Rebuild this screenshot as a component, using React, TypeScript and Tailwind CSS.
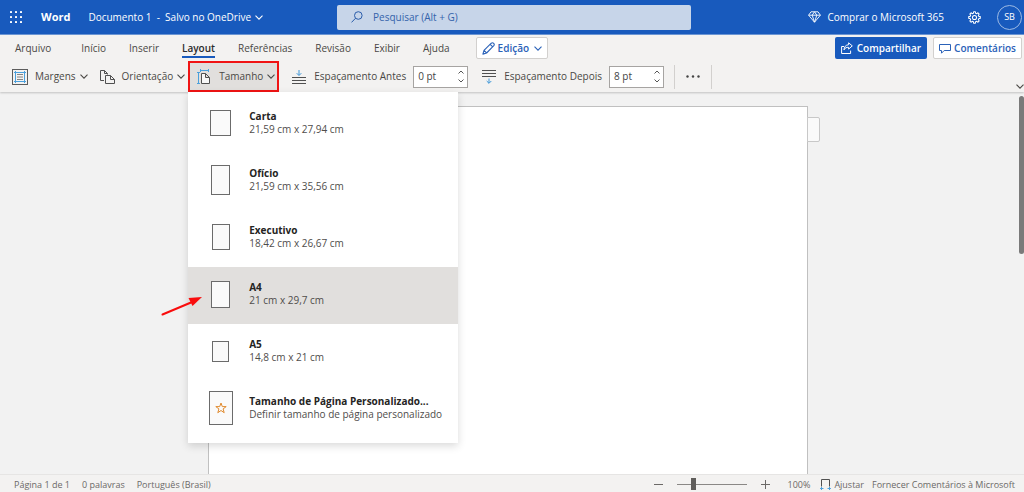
import React from "react";

type IconProps = { className?: string };

function Chevron({ className = "" }: IconProps) {
  return (
    <svg viewBox="0 0 8 5" fill="none" stroke="currentColor" strokeWidth="1.1" className={`h-[5px] w-2 shrink-0 ${className}`} aria-hidden="true">
      <path d="M.5.6 4 4.1 7.5.6" />
    </svg>
  );
}

function WaffleIcon() {
  const steps = [0, 5, 10];
  return (
    <svg viewBox="0 0 12 12" fill="currentColor" className="size-3" aria-hidden="true">
      {steps.map((y) => steps.map((x) => <rect key={`${x}-${y}`} x={x} y={y} width="2" height="2" rx=".6" />))}
    </svg>
  );
}

function SearchIcon() {
  return (
    <svg viewBox="0 0 12 12" fill="none" stroke="currentColor" className="size-3 shrink-0" aria-hidden="true">
      <circle cx="7.3" cy="4.5" r="3.8" />
      <path d="M4.6 7.2.5 11.4" />
    </svg>
  );
}

function DiamondIcon() {
  return (
    <svg viewBox="0 0 13 12" fill="none" stroke="currentColor" strokeLinejoin="round" className="h-3 w-[13px] shrink-0" aria-hidden="true">
      <path d="M3 .8h7l2.4 3.4-5.9 7L.6 4.2zM.6 4.2h11.8M4.2 4.2l2.3 7 2.3-7L6.5.8z" strokeWidth=".9" />
    </svg>
  );
}

function GearIcon() {
  return (
    <svg viewBox="0 0 24 24" fill="none" stroke="currentColor" strokeWidth="1.9" strokeLinejoin="round" className="size-[13px]" aria-hidden="true">
      <path d="m10 4 .4-2.7h3.2L14 4l2.2.9 2.2-1.6 2.3 2.3-1.6 2.2.9 2.2 2.7.4v3.2l-2.7.4-.9 2.2 1.6 2.2-2.3 2.3-2.2-1.6-2.2.9-.4 2.7h-3.2L10 20l-2.2-.9-2.2 1.6-2.3-2.3 1.6-2.2L4 14l-2.7-.4v-3.2L4 10l.9-2.2-1.6-2.2 2.3-2.3 2.2 1.6z" />
      <circle cx="12" cy="12" r="3.8" />
    </svg>
  );
}

function PencilIcon() {
  return (
    <svg viewBox="0 0 13 13" fill="none" stroke="currentColor" strokeWidth="1.1" strokeLinejoin="round" className="size-[13px]" aria-hidden="true">
      <path d="M.9 12.1 2 8.4 9.3 1.2c1.7-1.3 3.8.8 2.5 2.5L4.6 11zM2 8.4 4.6 11M8.2 2.3l2.5 2.5" />
    </svg>
  );
}

function ShareIcon() {
  return (
    <svg viewBox="0 0 12 12" fill="none" stroke="currentColor" strokeLinejoin="round" className="size-3" aria-hidden="true">
      <path d="M3 4.5H.6v7h9V8.6M7.6.8l3.7 3.1-3.7 3.2V5.3C5.4 5.2 4 6 3 7.9c.1-3 1.7-5 4.6-5.2z" />
    </svg>
  );
}

function CommentIcon() {
  return (
    <svg viewBox="0 0 12 11" fill="none" stroke="currentColor" className="h-[11px] w-3" aria-hidden="true">
      <path d="M.5 1.5h11v6H5.2L2.5 10.2V7.5h-2z" />
    </svg>
  );
}

function MarginsIcon() {
  return (
    <svg viewBox="0 0 16 16" fill="none" className="size-4 shrink-0" aria-hidden="true">
      <rect x=".5" y=".5" width="15" height="15" stroke="#5c5c5c" />
      <path d="M3.5 2v12M12.5 2v12M2 3.5h12M2 12.5h12" stroke="#4ba0dc" />
      <path d="M5 5.5h6M5 8h6M5 10.5h6" stroke="#777" strokeWidth=".9" />
    </svg>
  );
}

function OrientationIcon() {
  return (
    <svg viewBox="0 0 15 14" fill="none" stroke="#505050" className="h-3.5 w-[15px] shrink-0" aria-hidden="true">
      <path d="M4 10.5H.5V.5h4l3 3v1M4.5.5v3h3" />
      <path d="M5.5 5.5h5l4 4v4h-9zM10.5 5.5v4h4" />
    </svg>
  );
}

function SizeIcon() {
  return (
    <svg viewBox="0 0 13 15" fill="none" className="h-[15px] w-[13px] shrink-0" aria-hidden="true">
      <path d="M3.5 1.5h8M3.5 0v3M11.5 0v3M1.5 3.5v11M0 3.5h3M0 14.5h3" stroke="#4ba0dc" />
      <path d="M4.5 4.5h4l4 4v6h-8zM8.5 4.5v4h4" stroke="#505050" fill="#f7f7f7" />
    </svg>
  );
}

function SpaceBeforeIcon() {
  return (
    <svg viewBox="0 0 14 14" fill="none" className="size-3.5 shrink-0" aria-hidden="true">
      <path d="M7 0v5.2M4.7 3.2 7 5.5l2.3-2.3" stroke="#3f97d8" />
      <path d="M0 7.5h14M0 10.5h14M0 13.5h14" stroke="#505050" />
    </svg>
  );
}

function SpaceAfterIcon() {
  return (
    <svg viewBox="0 0 14 14" fill="none" className="size-3.5 shrink-0" aria-hidden="true">
      <path d="M0 .5h14M0 3.5h14M0 6.5h14" stroke="#505050" />
      <path d="M7 8.5v4.7M4.7 11 7 13.3 9.3 11" stroke="#3f97d8" />
    </svg>
  );
}

function FitIcon() {
  return (
    <svg viewBox="0 0 11 11" fill="none" className="size-[11px]" aria-hidden="true">
      <path d="M1.5 7.5v-7h8v7" stroke="#505050" />
      <path d="M.5 9.5h3M7.5 9.5h3M2 8 .5 9.5 2 11M9 8l1.5 1.5L9 11" stroke="#4ba0dc" />
    </svg>
  );
}

const tabs = ["Início", "Inserir", "Layout", "Referências", "Revisão", "Exibir", "Ajuda"];

const sizes = [
  { name: "Carta", detail: "21,59 cm x 27,94 cm", sheet: "h-[26px] w-[21px]" },
  { name: "Ofício", detail: "21,59 cm x 35,56 cm", sheet: "h-[30px] w-[19px]" },
  { name: "Executivo", detail: "18,42 cm x 26,67 cm", sheet: "h-[26px] w-[18px]" },
  { name: "A4", detail: "21 cm x 29,7 cm", sheet: "h-[27px] w-[19px]", selected: true },
  { name: "A5", detail: "14,8 cm x 21 cm", sheet: "h-[21px] w-[17px]" },
  { name: "Tamanho de Página Personalizado...", detail: "Definir tamanho de página personalizado", sheet: "h-[34px] w-6", custom: true },
];

function SizeMenu() {
  return (
    <div role="menu" aria-label="Tamanho" className="absolute top-full left-0 z-20 w-[270px] bg-white pt-1 pb-[5px] shadow-[0_3px_8px_rgba(0,0,0,0.15)]">
      {sizes.map((s) => (
        <button
          key={s.name}
          role="menuitem"
          className={`flex h-[57px] w-full items-center pb-[3px] pl-1 text-left ${s.selected ? "bg-[#e1dfdd]" : "bg-white"}`}
        >
          <span className="flex w-[57px] shrink-0 justify-center">
            <span className={`flex items-center justify-center border border-[#6b6b6b] bg-[#fafafa] ${s.sheet}`}>
              {s.custom && (
                <svg viewBox="0 0 12 12" fill="none" stroke="#e08a2e" className="size-3" aria-hidden="true">
                  <path d="m6 1 1.3 3.6h3.9L8.1 6.9l1.1 3.8L6 8.5l-3.2 2.2 1.1-3.8L.8 4.6h3.9z" />
                </svg>
              )}
            </span>
          </span>
          <span className="flex flex-col whitespace-nowrap text-[10px] leading-[13px]">
            <span className="font-bold text-[#252423]">{s.name}</span>
            <span className="text-[#4f4d4b]">{s.detail}</span>
          </span>
        </button>
      ))}
    </div>
  );
}

function Spinner({ id, value }: { id: string; value: string }) {
  return (
    <div className="flex h-[22px] w-[55px] border border-[#a6a4a2] bg-white">
      <input id={id} defaultValue={value} className="w-0 min-w-0 flex-1 pl-1 text-[10px] text-[#444] outline-none" />
      <div className="flex w-3 flex-col justify-around py-px text-[#555]">
        <button aria-label="Aumentar" className="flex justify-center"><svg viewBox="0 0 6 4" fill="none" stroke="currentColor" className="h-1 w-1.5"><path d="m.5 3.5L3 1l2.5 2.5" /></svg></button>
        <button aria-label="Diminuir" className="flex justify-center"><svg viewBox="0 0 6 4" fill="none" stroke="currentColor" className="h-1 w-1.5"><path d="M.5.5 3 3 5.5.5" /></svg></button>
      </div>
    </div>
  );
}

function Header() {
  return (
    <header className="grid h-[35px] shrink-0 grid-cols-[1fr_354px_1fr] items-center border-b border-[#6d97d6] bg-[#185abd] pl-1 text-white">
      <div className="flex items-center whitespace-nowrap pl-1.5">
        <button aria-label="Iniciador de aplicativos"><WaffleIcon /></button>
        <span className="ml-[19px] text-[11px] font-bold">Word</span>
        <button className="ml-[18px] flex items-center gap-1 text-[10px]">
          <span>Documento 1&nbsp; - &nbsp;Salvo no OneDrive</span>
          <Chevron />
        </button>
      </div>
      <label className="flex h-[25px] items-center gap-2.5 rounded-xs bg-[#c7d5e9] pl-3.5 text-[#2a5caa]">
        <SearchIcon />
        <input type="search" aria-label="Pesquisar" placeholder="Pesquisar (Alt + G)" className="min-w-0 flex-1 text-[10px] outline-none placeholder:text-[#3563ab]" />
      </label>
      <div className="flex items-center justify-end whitespace-nowrap pr-0.5">
        <button className="flex items-center gap-1.5 text-[10px]"><DiamondIcon />Comprar o Microsoft 365</button>
        <button aria-label="Configurações" className="ml-6"><GearIcon /></button>
        <button className="ml-4 flex size-[25px] items-center justify-center rounded-full border border-[#9dbae4] text-[9px]">SB</button>
      </div>
    </header>
  );
}

function Ribbon() {
  return (
    <div className="relative z-10 shrink-0 bg-[#f3f2f1] shadow-[0_1px_2px_rgba(0,0,0,0.2)]">
      <div className="flex h-[26px] items-center pr-0.5 pl-[15px]">
        <nav className="flex items-center gap-[23px] whitespace-nowrap text-[10px] leading-4 text-[#4a4845]">
          <button className="mr-[7px]">Arquivo</button>
          {tabs.map((t) => (
            <button key={t} className={t === "Layout" ? "relative font-semibold text-[#2b2b2b] after:absolute after:-bottom-0.5 after:left-0 after:h-0.5 after:w-full after:bg-[#185abd]" : ""}>{t}</button>
          ))}
        </nav>
        <button className="ml-[26px] flex h-[22px] items-center gap-[3px] rounded-xs border border-[#d2d0ce] bg-white px-[5px] text-[10px] font-semibold text-[#2b62b8]">
          <PencilIcon />Edição<Chevron className="ml-0.5" />
        </button>
        <div className="ml-auto flex gap-1.5 whitespace-nowrap text-[10px] font-semibold">
          <button className="flex h-[22px] items-center gap-1 rounded-xs bg-[#185abd] px-1.5 text-white"><ShareIcon />Compartilhar</button>
          <button className="flex h-[22px] items-center gap-[3px] rounded-xs border border-[#d2d0ce] bg-white px-[5px] text-[#2b62b8]"><CommentIcon />Comentários</button>
        </div>
      </div>
      <div className="flex h-[31px] items-center whitespace-nowrap pl-3 text-[10px] text-[#4a4845]">
        <button className="flex items-center"><MarginsIcon /><span className="mr-1 ml-[7px]">Margens</span><Chevron /></button>
        <button className="ml-3 flex items-center"><OrientationIcon /><span className="mr-1 ml-[7px]">Orientação</span><Chevron /></button>
        <div className="relative ml-[3px]">
          <button aria-expanded="true" className="flex h-[31px] w-[91px] items-center border-2 border-[#f01414] bg-[#e1dfdd] pl-[7px]">
            <SizeIcon /><span className="mr-1 ml-[9px]">Tamanho</span><Chevron />
          </button>
          <SizeMenu />
        </div>
        <label htmlFor="before" className="mr-[7px] ml-[13px] flex items-center gap-2"><SpaceBeforeIcon />Espaçamento Antes</label>
        <Spinner id="before" value="0 pt" />
        <label htmlFor="after" className="mr-[7px] ml-3.5 flex items-center gap-2"><SpaceAfterIcon />Espaçamento Depois</label>
        <Spinner id="after" value="8 pt" />
        <button aria-label="Mais opções" className="ml-2.5 flex h-6 w-[38px] items-center justify-center border-x border-[#d2d0ce]">
          <svg viewBox="0 0 14 3" fill="#444" className="h-[3px] w-3.5" aria-hidden="true"><circle cx="1.5" cy="1.5" r="1.2" /><circle cx="7" cy="1.5" r="1.2" /><circle cx="12.5" cy="1.5" r="1.2" /></svg>
        </button>
        <button aria-label="Recolher faixa" className="mt-5 ml-auto"><Chevron /></button>
      </div>
    </div>
  );
}

function StatusBar() {
  return (
    <footer className="flex h-[18px] shrink-0 items-center border-t border-[#e6e5e4] bg-[#f3f2f1] pt-0.5 pr-[9px] pl-3.5 text-[9px] whitespace-nowrap text-[#6b6967]">
      <div className="flex gap-3"><span>Página 1 de 1</span><span>0 palavras</span><button>Português (Brasil)</button></div>
      <div className="ml-auto flex items-center">
        <button aria-label="Reduzir zoom"><svg viewBox="0 0 9 9" stroke="currentColor" className="size-[9px]"><path d="M0 4.5h9" /></svg></button>
        <input
          type="range"
          aria-label="Zoom"
          defaultValue={22}
          className="mx-3.5 h-3 w-[70px] appearance-none bg-transparent [&::-webkit-slider-runnable-track]:h-px [&::-webkit-slider-runnable-track]:bg-[#8a8886] [&::-webkit-slider-thumb]:-mt-1.5 [&::-webkit-slider-thumb]:h-3 [&::-webkit-slider-thumb]:w-[5px] [&::-webkit-slider-thumb]:appearance-none [&::-webkit-slider-thumb]:bg-[#605e5c]"
        />
        <button aria-label="Ampliar zoom"><svg viewBox="0 0 9 9" stroke="currentColor" className="size-[9px]"><path d="M0 4.5h9M4.5 0v9" /></svg></button>
        <span className="ml-[18px]">100%</span>
        <button className="ml-2.5 flex items-center gap-[3px]"><FitIcon />Ajustar</button>
        <a href="#feedback" className="ml-2">Fornecer Comentários à Microsoft</a>
      </div>
    </footer>
  );
}

export default function App() {
  return (
    <div className="flex h-screen flex-col overflow-hidden bg-[#f2f2f2] font-['Open_Sans','Noto_Sans',sans-serif]">
      <Header />
      <Ribbon />
      <main className="relative flex min-h-0 flex-1 justify-center pt-3.5 pr-2">
        <div className="relative w-[600px] border border-b-0 border-[#c0c0c0] bg-white">
          <span className="absolute top-2.5 left-full h-[25px] w-[13px] rounded-r-xs border border-[#c8c8c8] bg-[#fafafa]" />
        </div>
        <div className="absolute top-1 right-0 h-[158px] w-[5px] rounded-full bg-[#7a7a7a]" />
      </main>
      <svg viewBox="0 0 42 20" className="absolute top-[296px] left-[161px] z-20 h-5 w-[42px]" aria-hidden="true">
        <path d="M1.5 18.5 30 6.5" stroke="#f90d0d" strokeWidth="2" strokeLinecap="round" />
        <path d="M41 1 27.5 2l4 8z" fill="#f90d0d" />
      </svg>
      <StatusBar />
    </div>
  );
}
